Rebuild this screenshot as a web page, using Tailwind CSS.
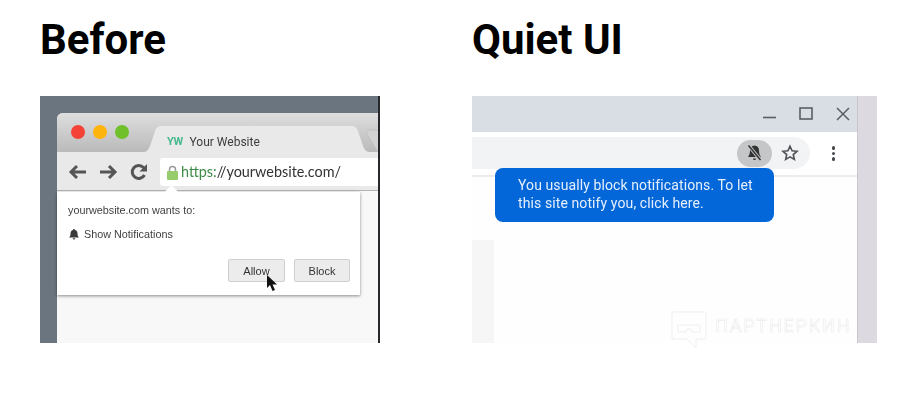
<!DOCTYPE html>
<html lang="en">
<head>
  <meta charset="UTF-8" />
  <meta name="viewport" content="width=device-width, initial-scale=1.0" />
  <title>Before / Quiet UI</title>
  <script src="https://cdn.jsdelivr.net/npm/@tailwindcss/browser@4"></script>
</head>
<body class="bg-white w-[900px] h-[401px] overflow-hidden font-['Roboto',sans-serif]">
  <div class="flex pl-10 gap-[92px]">

    <!-- before -->
    <section class="w-[340px]">
      <h2 class="h-[96px] pt-[16px] text-[42px] leading-[48px] font-bold text-black">Before</h2>
      <div class="relative h-[247px] overflow-hidden bg-[#6b7580] pl-[17px] pt-[17px] border-r-2 border-[#26282b] blur-[0.3px]">
        <div class="h-[230px] w-[340px] rounded-tl-[6px] overflow-hidden bg-[#f8f8f8]">
          <!-- tab strip -->
          <div class="relative h-[39px] pl-[14px] pt-[12px] flex gap-[8px] bg-gradient-to-b from-[#dedede] to-[#bababa]">
            <span class="w-[14px] h-[14px] rounded-full bg-[#f44336]"></span>
            <span class="w-[14px] h-[14px] rounded-full bg-[#fdb50e]"></span>
            <span class="w-[14px] h-[14px] rounded-full bg-[#6fc02b]"></span>
            <svg class="absolute left-[86px] top-[13px]" width="240" height="26" viewBox="0 0 240 26">
              <path d="M0 26 C4 26 5 24 7 20 L12 5 C13 2 15 0 19 0 L208 0 C212 0 214 2 215 5 L220 20 C222 24 223 26 228 26 Z" fill="#e9e9e9" />
              <path d="M235 26 L224 8 C223 5 225 4 227 4 L240 4 L240 26 Z" fill="#d2d2d2" stroke="#c0c0c0" />
            </svg>
            <div class="absolute left-[110px] top-[21px] flex items-center gap-[7px] text-[12px] leading-[16px] text-[#3d3d3d]">
              <span class="font-bold text-[#45b98d] text-[11px] tracking-[-0.5px]">YW</span>
              <span>Your Website</span>
            </div>
          </div>
          <!-- toolbar -->
          <div class="h-[39px] bg-[#e9e9e9] border-b border-[#b4b4b4] pt-[6px] pl-[11px] flex">
            <div class="flex items-center gap-[12px] h-[28px] w-[92px]">
              <svg width="19" height="16" viewBox="0 0 19 16" fill="none" stroke="#555" stroke-width="3"><path d="M18 8H3M9 2 3 8l6 6" /></svg>
              <svg width="19" height="16" viewBox="0 0 19 16" fill="none" stroke="#555" stroke-width="3"><path d="M1 8h15M10 2l6 6-6 6" /></svg>
              <svg width="18" height="18" viewBox="0 0 18 18" fill="none" stroke="#555" stroke-width="3"><path d="M14.500 12a6.500 6.500 0 1 1-1-7.500L15 6" /><path d="M17 1v7.500h-7.500z" fill="#555" stroke="none" /></svg>
            </div>
            <div class="h-[28px] flex-1 bg-white rounded-l-[3px] flex items-center pl-[7px] gap-[3px] font-['Lato',sans-serif] text-[14.400px] text-[#333] whitespace-nowrap">
              <svg width="11" height="15" viewBox="0 0 11 15"><path d="M2.500 7V4.500a3 3 0 0 1 6 0V7" fill="none" stroke="#9a9a9a" stroke-width="1.500" /><rect y="6" width="11" height="9" rx="1" fill="#96cc6c" /></svg>
              <span><span class="text-[#3d8b47]">https</span><span class="text-[#3d8b47]">:</span>//yourwebsite.com/</span>
            </div>
          </div>
        </div>

        <!-- permission popup -->
        <div class="absolute left-[17px] top-[96px] w-[303px] h-[103px] bg-white shadow-[0_1px_3px_rgba(0,0,0,0.45)] pl-[11px] pr-[10px] pt-[10px] font-['Liberation_Sans',sans-serif] text-[10.800px] leading-[16px] text-[#3f3f3f]">
          <span class="absolute left-[110px] -top-[5px] w-[9px] h-[9px] rotate-45 bg-white"></span>
          <p>yourwebsite.com wants to:</p>
          <p class="flex items-center gap-[5px] mt-[8px]">
            <svg class="ml-[1px]" width="10" height="11" viewBox="0 0 10 11" fill="#3a3a3a"><path d="M5 0a1 1 0 0 1 1 1c2 .5 2.500 2 2.500 3.500 0 2 .5 3 1.500 4H0c1-1 1.500-2 1.500-4C1.500 3 2 1.500 4 1a1 1 0 0 1 1-1ZM3.700 9.300h2.600A1.300 1.300 0 0 1 3.700 9.300Z" /></svg>
            Show Notifications
          </p>
          <div class="flex justify-end gap-[9px] mt-[17px]">
            <button class="w-[57px] h-[23px] rounded-[2px] bg-[#ececec] border border-[#cfcfcf] text-[11px] text-[#333]">Allow</button>
            <button class="w-[56px] h-[23px] rounded-[2px] bg-[#ececec] border border-[#cfcfcf] text-[11px] text-[#333]">Block</button>
          </div>
        </div>

        <!-- cursor -->
        <svg class="absolute left-[226px] top-[179px]" width="12" height="18" viewBox="0 0 12 18"><path d="M1 0v13l3-3 2.500 6 2.500-1-2.500-5.500H11Z" fill="#111" /></svg>
      </div>
    </section>

    <!-- quiet ui -->
    <section class="w-[405px]">
      <h2 class="h-[96px] pt-[16px] text-[42px] leading-[48px] font-bold text-black">Quiet UI</h2>
      <div class="relative h-[247px] flex bg-[#fefefe] blur-[0.3px]">
        <div class="w-[385px] flex flex-col">
          <div class="h-[36px] bg-[#d9dde4] flex items-center justify-end">
            <svg class="mr-[22px]" width="14" height="14" viewBox="0 0 14 14" fill="none" stroke="#5a5e63" stroke-width="1.600"><path d="M0 10.500h13" /></svg>
            <svg class="mr-[23px]" width="14" height="14" viewBox="0 0 14 14" fill="none" stroke="#5a5e63" stroke-width="1.600"><rect x="1" y="1" width="12" height="11" /></svg>
            <svg class="mr-[7px]" width="14" height="14" viewBox="0 0 14 14" fill="none" stroke="#5a5e63" stroke-width="1.500"><path d="M1 1l12 12M13 1 1 13" /></svg>
          </div>
          <div class="h-[45px] bg-white border-b-2 border-[#ececec] pt-[5px] flex">
            <div class="w-[338px] h-[32px] rounded-r-full bg-[#f1f3f4] flex items-center justify-end pr-[11px] gap-[9px]">
              <span class="w-[35px] h-[27px] rounded-full bg-[#c5c6c7] flex items-center justify-center">
                <svg width="17" height="18" viewBox="0 0 17 18"><path d="M8.500 1.500c3 0 4.500 2.200 4.500 5 0 3 .8 5 2 6.500H2c1.200-1.500 2-3.500 2-6.500 0-2.800 1.500-5 4.500-5ZM7 14.500h3A1.500 1.500 0 0 1 7 14.500Z" fill="#333" /><path d="M2.500 1.500 14.500 16" stroke="#c5c6c7" stroke-width="3.500" /><path d="M2.500 1.500 14.500 16" stroke="#333" stroke-width="1.500" /></svg>
              </span>
              <svg width="18" height="18" viewBox="0 0 24 24" fill="none" stroke="#4f5256" stroke-width="2.200" stroke-linejoin="miter"><path d="m12 3 2.800 6 6.500.7-4.900 4.400 1.400 6.400-5.800-3.300-5.800 3.300 1.400-6.400L2.700 9.700 9.200 9Z" /></svg>
            </div>
            <div class="flex-1 flex flex-col items-center gap-[2px] pt-[9px]">
              <span class="w-[3.500px] h-[3.500px] rounded-full bg-[#45484c]"></span>
              <span class="w-[3.500px] h-[3.500px] rounded-full bg-[#45484c]"></span>
              <span class="w-[3.500px] h-[3.500px] rounded-full bg-[#45484c]"></span>
            </div>
          </div>
          <div class="flex-1 pt-[63px]">
            <div class="w-[22px] h-full bg-[#f6f6f6]"></div>
          </div>
        </div>
        <div class="w-[20px] bg-[#dcd9e1] border-l border-[#c9c6ce]"></div>

        <!-- tooltip -->
        <div class="absolute left-[23px] top-[72px] w-[279px] h-[54px] rounded-[8px] bg-[#0366d9] pl-[23px] pt-[8px] text-[14px] leading-[18px] tracking-[0.1px] text-[#e6f0fc]">
          You usually block notifications. To let<br />this site notify you, click here.
        </div>

        <!-- watermark -->
        <svg class="absolute left-[199px] top-[215px] overflow-visible" width="36" height="40" viewBox="0 0 36 40" fill="none" stroke="#efefef" stroke-width="1"><path d="M2 1h32a1 1 0 0 1 1 1v25a1 1 0 0 1-1 1H25v9l-9-9H2a1 1 0 0 1-1-1V2a1 1 0 0 1 1-1Z" /><path d="M7 14h22v6a1 1 0 0 1-1 1h-7l-1-3h-4l-1 3H8a1 1 0 0 1-1-1Z" /></svg>
        <span class="absolute left-[243px] top-[219px] text-[18px] leading-[22px] tracking-[1.800px] text-transparent [-webkit-text-stroke:0.6px_#ececec] whitespace-nowrap">ПАРТНЕРКИН</span>
      </div>
    </section>
  </div>
</body>
</html>
